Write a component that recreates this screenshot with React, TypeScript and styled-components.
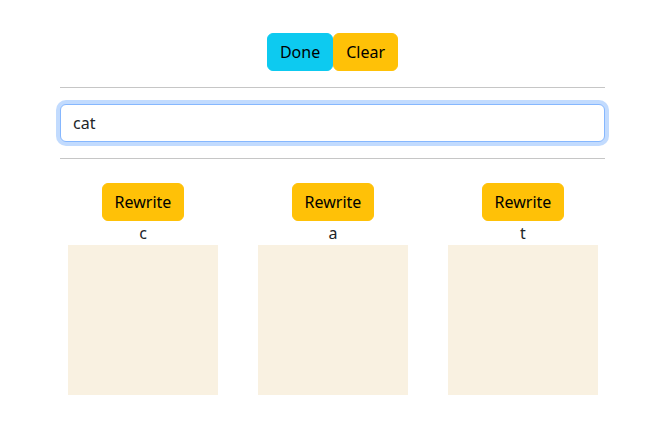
import React from "react";
import styled, { createGlobalStyle } from "styled-components";

const Global = createGlobalStyle`
  html, body { margin: 0; padding: 0; background: #fff; }
  body {
    font-family: "Noto Sans", "Open Sans", sans-serif;
    font-size: 16px;
    line-height: 24px;
    color: #212529;
  }
`;

const Page = styled.div`
  width: 545px;
  margin-left: 60px;
  padding-top: 33px;
`;

const Toolbar = styled.div`
  display: flex;
  justify-content: center;
`;

const Button = styled.button<{ $tone: "info" | "warning" }>`
  font-family: inherit;
  font-size: 16px;
  line-height: 24px;
  height: 38px;
  padding: 6px 12px;
  border: 1px solid ${(p) => (p.$tone === "info" ? "#0dcaf0" : "#ffc107")};
  background: ${(p) => (p.$tone === "info" ? "#0dcaf0" : "#ffc107")};
  color: #000;
  border-radius: 6px;
  cursor: pointer;
`;

const Rule = styled.hr`
  margin: 16px 0;
  border: 0;
  border-top: 1px solid #c6c6c6;
  height: 0;
`;

const Input = styled.input`
  display: block;
  box-sizing: border-box;
  width: 100%;
  height: 38px;
  padding: 6px 12px;
  font-family: inherit;
  font-size: 16px;
  line-height: 24px;
  color: #212529;
  border: 1px solid #86b7fe;
  border-radius: 6px;
  box-shadow: 0 0 0 4px rgba(13, 110, 253, 0.25);
  outline: none;
`;

const Grid = styled.div`
  display: grid;
  grid-template-columns: repeat(3, 150px);
  column-gap: 40px;
  padding-left: 8px;
  margin-top: 24px;
`;

const Column = styled.div`
  display: flex;
  flex-direction: column;
  align-items: center;
`;

const Letter = styled.div`
  height: 24px;
  line-height: 24px;
  text-align: center;
`;

const Canvas = styled.div`
  width: 150px;
  height: 150px;
  background: #f9f1e1;
`;

export default function App() {
  const letters = ["c", "a", "t"];
  return (
    <>
      <Global />
      <Page>
        <Toolbar>
          <Button $tone="info">Done</Button>
          <Button $tone="warning">Clear</Button>
        </Toolbar>
        <Rule />
        <Input defaultValue="cat" />
        <Rule />
        <Grid>
          {letters.map((l) => (
            <Column key={l}>
              <Button $tone="warning">Rewrite</Button>
              <Letter>{l}</Letter>
              <Canvas />
            </Column>
          ))}
        </Grid>
      </Page>
    </>
  );
}
